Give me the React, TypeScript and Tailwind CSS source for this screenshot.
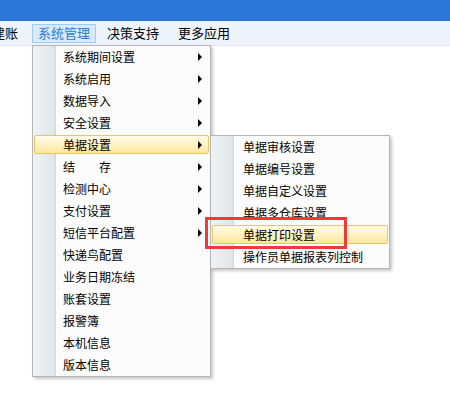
import React from 'react'

const mainItems = [
  { label: '系统期间设置', sub: true },
  { label: '系统启用', sub: true },
  { label: '数据导入', sub: true },
  { label: '安全设置', sub: true },
  { label: '单据设置', sub: true, active: true },
  { label: '结\u3000\u3000存', sub: true },
  { label: '检测中心', sub: true },
  { label: '支付设置', sub: true },
  { label: '短信平台配置', sub: true },
  { label: '快递鸟配置' },
  { label: '业务日期冻结' },
  { label: '账套设置' },
  { label: '报警簿' },
  { label: '本机信息' },
  { label: '版本信息' },
]

const subItems = [
  { label: '单据审核设置' },
  { label: '单据编号设置' },
  { label: '单据自定义设置' },
  { label: '单据多仓库设置' },
  { label: '单据打印设置', active: true },
  { label: '操作员单据报表列控制' },
]

type Item = { label: string; sub?: boolean; active?: boolean }

function MenuRow({ item, pad }: { item: Item; pad: string }) {
  return (
    <div className="relative h-[22px]">
      {item.active && (
        <div className="absolute left-[1px] right-[1px] top-[1px] h-[19px] rounded-[2px] border border-[#e5c66c] bg-gradient-to-b from-[#fffbea] via-[#fff2c4] to-[#ffe79c]" />
      )}
      <div className={`relative flex h-full items-center ${pad}`}>
        <span className="whitespace-nowrap">{item.label}</span>
        {item.sub && (
          <span className="ml-auto mr-[8px] h-0 w-0 border-y-[4px] border-l-[4px] border-y-transparent border-l-black" />
        )}
      </div>
    </div>
  )
}

function Menu({ items, className, pad }: { items: Item[]; className: string; pad: string }) {
  return (
    <div
      className={`absolute border border-[#b5b5b5] bg-[#fcfcfc] shadow-[2px_2px_3px_rgba(0,0,0,0.22)] ${className}`}
    >
      <div className="absolute left-0 top-0 bottom-0 w-[23px] border-r border-r-[#cfd6dc] bg-gradient-to-r from-[#eef2f5] to-[#dfe6ea]" />
      <div className="absolute left-[23px] top-0 bottom-0 w-px bg-white" />
      <div className="relative">
        {items.map((it) => (
          <MenuRow key={it.label} item={it} pad={pad} />
        ))}
      </div>
    </div>
  )
}

export default function App() {
  return (
    <div
      className="relative h-[396px] w-[450px] overflow-hidden bg-white text-[12px] text-black"
      style={{ fontFamily: '"Noto Sans CJK SC", "Noto Sans", sans-serif' }}
    >
      <div className="h-[21px] bg-[#2a77d8]" />
      <div className="flex h-[25px] items-center border-b border-[#e2e8ef] bg-[#eef4fb] text-[13px]">
        <span className="ml-[-8px] whitespace-nowrap">建账</span>
        <div className="ml-[14px] flex h-[19px] items-center border border-[#9dcdf3] bg-[#d8eafb] px-[5px] text-[#2b7ad8]">
          系统管理
        </div>
        <span className="ml-[11px]">决策支持</span>
        <span className="ml-[19px]">更多应用</span>
      </div>

      <Menu items={mainItems} className="left-[32px] top-[45px] w-[179px]" pad="pl-[30px]" />
      <Menu items={subItems} className="left-[210px] top-[135px] w-[180px]" pad="pl-[32px]" />

      <div className="absolute left-[205px] top-[217px] h-[32px] w-[142px] border-[3px] border-[#ef3a3a]" />
    </div>
  )
}
